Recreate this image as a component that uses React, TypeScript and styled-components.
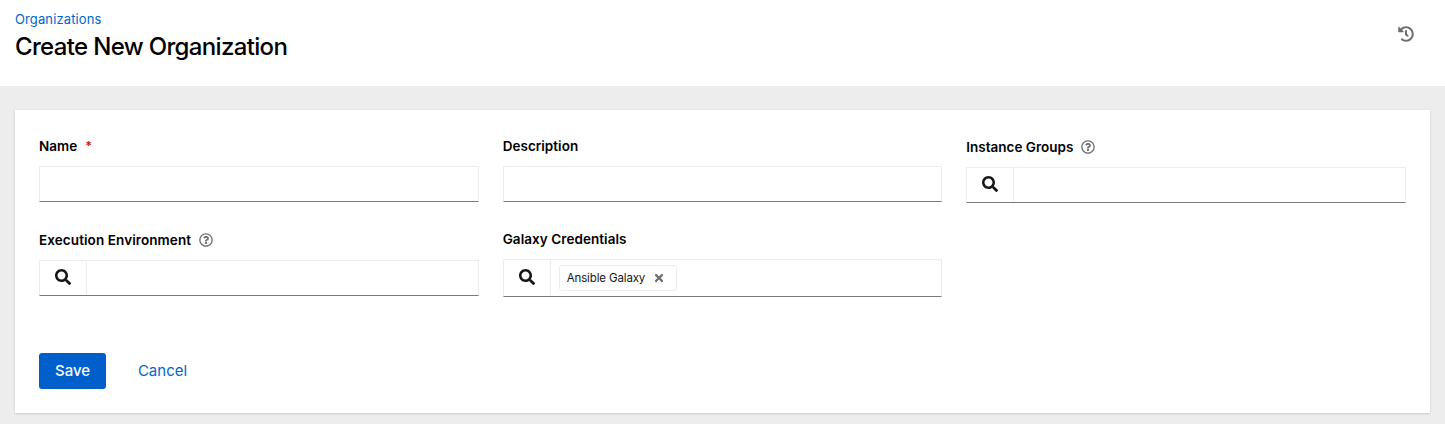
import React from 'react';
import styled, { createGlobalStyle } from 'styled-components';
import { FaHistory, FaRegQuestionCircle, FaSearch, FaTimes } from 'react-icons/fa';

const GlobalStyle = createGlobalStyle`
  *, *::before, *::after { box-sizing: border-box; }
  body {
    margin: 0;
    background: #ededed;
    color: #151515;
    font-family: Inter, "Liberation Sans", sans-serif;
    font-size: 14px;
  }
`;

const Header = styled.header`
  display: flex;
  justify-content: space-between;
  height: 86px;
  padding: 9px 31px 0 15px;
  background: #fff;
`;

const Breadcrumb = styled.a`
  display: block;
  width: max-content;
  font-size: 13px;
  line-height: 21px;
  letter-spacing: 0.12px;
  color: #0066cc;
  text-decoration: none;
`;

const Title = styled.h1`
  width: max-content;
  margin: 1px 0 0;
  font-size: 24px;
  font-weight: 500;
  line-height: 31px;
  letter-spacing: -0.66px;
  color: #000;
`;

const HistoryButton = styled.button`
  display: flex;
  align-self: flex-start;
  margin-top: 17px;
  padding: 0;
  border: 0;
  background: none;
  color: #6a6e73;
`;

const Card = styled.form`
  margin: 24px 15px 11px;
  padding: 24px;
  background: #fff;
  box-shadow: 0 1px 2px rgba(3, 3, 3, 0.12), 0 0 2px rgba(3, 3, 3, 0.06);
`;

const Fields = styled.div`
  display: grid;
  grid-template-columns: repeat(3, 1fr);
  align-items: start;
  gap: 24px;
`;

const Label = styled.div<{ $help?: boolean }>`
  display: flex;
  align-items: center;
  height: ${(p) => (p.$help ? 33 : 32)}px;
  padding-bottom: ${(p) => (p.$help ? 7 : 8)}px;
`;

const LabelText = styled.label<{ $tracking: number }>`
  font-size: 13.5px;
  font-weight: 600;
  line-height: 20px;
  letter-spacing: ${(p) => p.$tracking}px;
  white-space: nowrap;
  color: #000;
`;

const Required = styled.span`
  margin-left: 8px;
  font-size: 12px;
  font-weight: 700;
  line-height: 20px;
  color: #c9190b;
`;

const HelpIcon = styled(FaRegQuestionCircle)`
  margin-left: 8px;
  font-size: 14px;
  color: #6a6e73;
`;

const TextInput = styled.input`
  display: block;
  width: 100%;
  height: 36px;
  padding: 0 8px;
  border: 1px solid #ededed;
  border-bottom-color: #777a7e;
  border-radius: 0;
  outline: 0;
  background: #fff;
  font: inherit;
`;

const Lookup = styled.div<{ $height: number }>`
  display: flex;
  height: ${(p) => p.$height}px;
  border: 1px solid #ededed;
  border-bottom-color: #777a7e;
`;

const SearchButton = styled.button`
  display: flex;
  align-items: center;
  justify-content: center;
  width: 47px;
  padding: 0 0 2px;
  border: 0;
  border-right: 1px solid #ededed;
  background: #fff;
  font-size: 16px;
  color: #151515;
`;

const Chips = styled.div`
  display: flex;
  flex: 1;
  padding: 5px 8px;
`;

const Chip = styled.span`
  display: flex;
  align-items: center;
  width: 118px;
  height: 26px;
  padding: 0 7px;
  border: 1px solid #ededed;
  border-radius: 3px;
  font-size: 11.5px;
  line-height: 16px;
  letter-spacing: -0.13px;
  white-space: nowrap;
`;

const ChipText = styled.span`
  padding-bottom: 1px;
`;

const ChipClose = styled(FaTimes)`
  margin-left: auto;
  margin-right: 4px;
  font-size: 12px;
  color: #6a6e73;
`;

const Actions = styled.div`
  display: flex;
  gap: 16px;
  margin-top: 56px;
`;

const Button = styled.button<{ $primary?: boolean }>`
  height: 36px;
  width: ${(p) => (p.$primary ? 67 : 81)}px;
  padding: 0;
  border: 0;
  border-radius: 3px;
  background: ${(p) => (p.$primary ? '#005fcb' : 'transparent')};
  color: ${(p) => (p.$primary ? '#fff' : '#0066cc')};
  font-family: inherit;
  font-size: 15px;
  font-weight: ${(p) => (p.$primary ? 500 : 400)};
  line-height: 24px;
`;

type FieldLabelProps = { text: string; tracking?: number; required?: boolean; help?: boolean };

function FieldLabel({ text, tracking = 0, required, help }: FieldLabelProps) {
  return (
    <Label $help={help}>
      <LabelText $tracking={tracking}>{text}</LabelText>
      {required && <Required>*</Required>}
      {help && <HelpIcon />}
    </Label>
  );
}

function LookupField({ height = 36, children }: { height?: number; children?: React.ReactNode }) {
  return (
    <Lookup $height={height}>
      <SearchButton type="button" aria-label="Search">
        <FaSearch />
      </SearchButton>
      <Chips>{children}</Chips>
    </Lookup>
  );
}

export default function App() {
  return (
    <>
      <GlobalStyle />
      <Header>
        <div>
          <Breadcrumb>Organizations</Breadcrumb>
          <Title>Create New Organization</Title>
        </div>
        <HistoryButton aria-label="History">
          <FaHistory size={16} />
        </HistoryButton>
      </Header>
      <Card>
        <Fields>
          <div>
            <FieldLabel text="Name" required />
            <TextInput />
          </div>
          <div>
            <FieldLabel text="Description" tracking={0.03} />
            <TextInput />
          </div>
          <div>
            <FieldLabel text="Instance Groups" help />
            <LookupField />
          </div>
          <div>
            <FieldLabel text="Execution Environment" tracking={0.09} help />
            <LookupField />
          </div>
          <div>
            <FieldLabel text="Galaxy Credentials" tracking={0.06} />
            <LookupField height={38}>
              <Chip>
                <ChipText>Ansible Galaxy</ChipText>
                <ChipClose />
              </Chip>
            </LookupField>
          </div>
        </Fields>
        <Actions>
          <Button type="button" $primary>Save</Button>
          <Button type="button">Cancel</Button>
        </Actions>
      </Card>
    </>
  );
}
